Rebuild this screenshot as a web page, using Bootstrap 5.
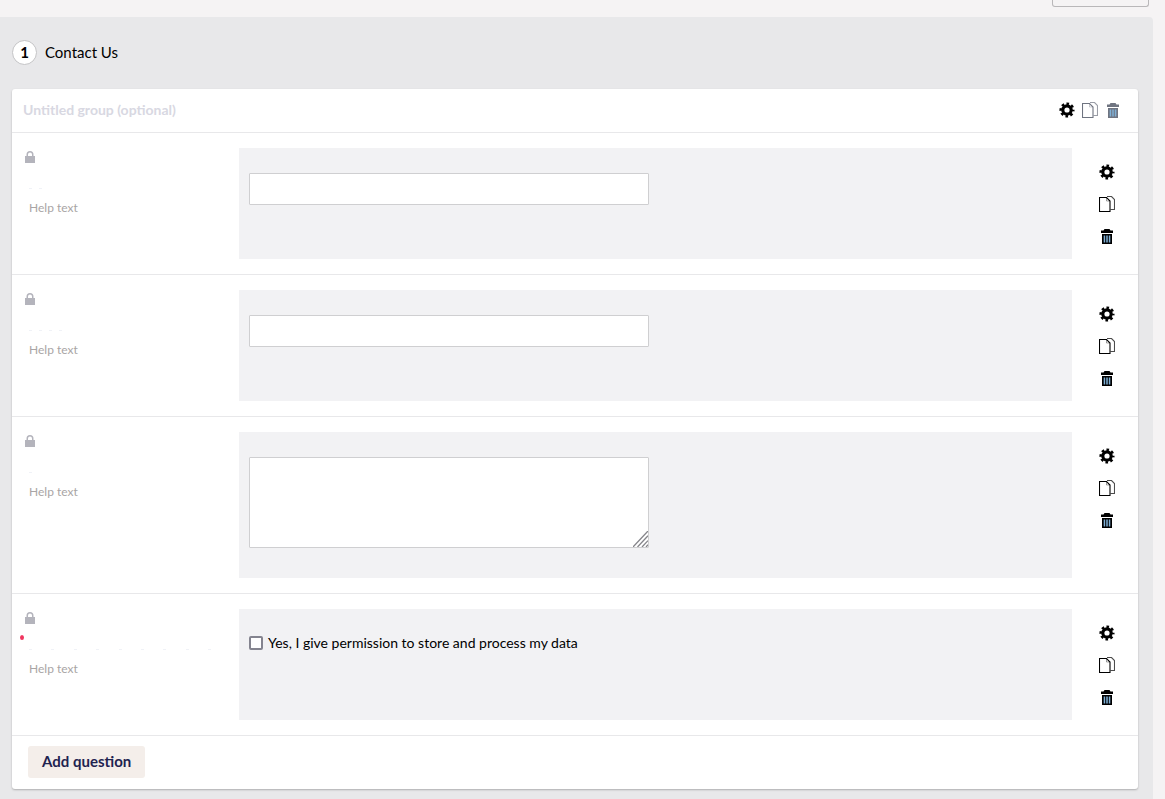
<!DOCTYPE html>
<html lang="en">
<head>
<meta charset="utf-8">
<title>Contact Us</title>
<link href="https://cdn.jsdelivr.net/npm/bootstrap@5.3.0/dist/css/bootstrap.min.css" rel="stylesheet">
<style>
html,body{height:799px;overflow:hidden}
body{background:#f5f3f4;font-family:Lato,"Liberation Sans",sans-serif;font-size:14px;color:#000}
.top-strip{height:17px;padding-right:16px}
.stub-btn{width:97px;height:7px;border:1px solid #b9b7b9;border-top:0;border-radius:0 0 3px 3px;background:transparent;display:block}
.section-panel{width:1153px;height:782px;background:#e8e8ea;border-radius:0 4px 0 0;padding:0 15px 0 12px}
.section-head{height:72px;gap:8px;font-size:15px;padding-bottom:2px}
.step-no{width:25px;height:25px;border:1px solid #c4c4c6;border-radius:50%;background:#fff;font-weight:700;font-size:15px;line-height:1}
.group-card{border:0;border-radius:3px;box-shadow:0 1px 2px rgba(0,0,0,.25);background:#fff;--bs-card-bg:#fff}
.group-head{height:44px;padding:0 17px 2px 11px;border-bottom:1px solid #e8e8ea}
.group-title{font-weight:700;font-size:14px;color:#d8d8e2}
.head-icons{gap:7px;line-height:0;padding-top:1px}
.q-row{padding:15px 0;border-bottom:1px solid #e8e8ea;min-height:142px}
.q-left{width:227px;flex:none;padding:0 0 0 13px;position:relative}
.lock{display:block;margin-top:3px;color:#b4b4bc}
.specks{height:1px;margin:25px 0 0 4px;gap:7px}
.specks i{display:block;width:3px;height:1px;background:#f0f2f7}
.specks-wide{width:182px;gap:0;justify-content:space-between}
.help-line{color:#a9a5a5;font-size:12px;line-height:15px;margin:11px 0 0 4px}
.req{position:absolute;left:8px;top:26px;width:4px;height:5px;background:#f0355f;border-radius:50%}
.q-body{flex:1 1 auto;background:#f2f2f4;padding:25px 10px 30px;min-height:111px}
.txt-field{display:block;width:400px;height:32px;border:1px solid #cfcfd1;background:#fff;border-radius:1px;padding:0;outline:0}
.area-wrap{width:400px}
textarea.txt-field{height:91px;resize:none}
.grip{position:absolute;right:1px;bottom:1px;display:block;pointer-events:none}
.check-line{margin-top:-1px;gap:5px;line-height:20px;color:#000}
.chk{width:14px;height:14px;border:2px solid #84848f;border-radius:2px;background:#fff;flex:none;appearance:none;margin:0}
.q-icons{width:66px;flex:none;gap:16px;padding:16px 0 0 4px}
.q-icons svg,.head-icons svg{display:block}
.muted-i{color:#6f7480}
.card-foot{height:53px;padding:10px 16px}
.add-btn{height:32px;padding:0 14px 2px;background:#f4eeea;border:0;border-radius:3px;font-weight:700;font-size:15px;color:#1f2350}
</style>
</head>
<body>
<svg width="0" height="0" class="position-absolute">
  <symbol id="ic-gear" viewBox="0 0 16 16">
    <circle cx="8" cy="8" r="4.200" fill="none" stroke="currentColor" stroke-width="3.200"/>
    <circle cx="8" cy="8" r="6.300" fill="none" stroke="currentColor" stroke-width="2.500" stroke-dasharray="2.600 2.350" stroke-dashoffset="1.300"/>
  </symbol>
  <symbol id="ic-copy" viewBox="0 0 16 16">
    <path d="M8 .5H12.500L15.500 3.500V13.500H11.500" fill="none" stroke="currentColor" stroke-opacity=".7" stroke-width="1.100"/>
    <path d="M.5 1.500H7.500L11 5V15.500H.5Z" fill="#fff" stroke="currentColor" stroke-width="1.100"/>
    <path d="M7.500 1.500V5H11" fill="none" stroke="currentColor" stroke-opacity=".45" stroke-width=".8"/>
  </symbol>
  <symbol id="ic-trash" viewBox="0 0 16 16">
    <path d="M5.500 1h5l1 1.500h2.500V5H2V2.500h2.500Z" fill="currentColor"/>
    <path d="M3 6h10v10H3Z" fill="currentColor"/>
    <path d="M4.700 7.500h1.500V14.500H4.700ZM7.250 7.500h1.500V14.500H7.250ZM9.800 7.500h1.500V14.500H9.800Z" fill="#7fb0d6"/>
  </symbol>
  <symbol id="ic-lock" viewBox="0 0 10 12">
    <path d="M0 5h1.500V3.500a3.500 3.500 0 0 1 7 0V5H10v7H0ZM3 5h4V3.500a2 2 0 0 0-4 0Z" fill="currentColor" fill-rule="evenodd"/>
  </symbol>
</svg>

<div class="top-strip d-flex justify-content-end">
  <button type="button" class="stub-btn" aria-label="Action"></button>
</div>

<main class="section-panel">
  <div class="section-head d-flex align-items-center">
    <span class="step-no d-inline-flex align-items-center justify-content-center">1</span>
    <span>Contact Us</span>
  </div>

  <div class="card group-card">
    <div class="group-head d-flex align-items-center justify-content-between">
      <span class="group-title">Untitled group (optional)</span>
      <span class="head-icons d-flex align-items-center">
        <svg width="16" height="16"><use href="#ic-gear"/></svg>
        <svg class="muted-i" width="16" height="16"><use href="#ic-copy"/></svg>
        <svg class="muted-i" width="16" height="16"><use href="#ic-trash"/></svg>
      </span>
    </div>

    <section class="q-row d-flex">
      <div class="q-left">
        <svg class="lock" width="10" height="12"><use href="#ic-lock"/></svg>
        <div class="specks d-flex"><i></i><i></i></div>
        <div class="help-line">Help text</div>
      </div>
      <div class="q-body"><input class="txt-field" type="text" aria-label="Answer"></div>
      <div class="q-icons d-flex flex-column align-items-center">
        <svg width="16" height="16"><use href="#ic-gear"/></svg>
        <svg width="16" height="16"><use href="#ic-copy"/></svg>
        <svg width="16" height="16"><use href="#ic-trash"/></svg>
      </div>
    </section>

    <section class="q-row d-flex">
      <div class="q-left">
        <svg class="lock" width="10" height="12"><use href="#ic-lock"/></svg>
        <div class="specks d-flex"><i></i><i></i><i></i><i></i></div>
        <div class="help-line">Help text</div>
      </div>
      <div class="q-body"><input class="txt-field" type="text" aria-label="Answer"></div>
      <div class="q-icons d-flex flex-column align-items-center">
        <svg width="16" height="16"><use href="#ic-gear"/></svg>
        <svg width="16" height="16"><use href="#ic-copy"/></svg>
        <svg width="16" height="16"><use href="#ic-trash"/></svg>
      </div>
    </section>

    <section class="q-row d-flex">
      <div class="q-left">
        <svg class="lock" width="10" height="12"><use href="#ic-lock"/></svg>
        <div class="specks d-flex"><i></i></div>
        <div class="help-line">Help text</div>
      </div>
      <div class="q-body">
        <div class="area-wrap position-relative">
          <textarea class="txt-field" aria-label="Answer"></textarea>
          <svg class="grip" width="15" height="16" viewBox="0 0 15 16" aria-hidden="true">
            <path d="M0 16 15 0M4.500 16 15 4.800M9 16 15 9.600M13 16 15 13.800" fill="none" stroke="#85858a" stroke-width="1.300"/>
          </svg>
        </div>
      </div>
      <div class="q-icons d-flex flex-column align-items-center">
        <svg width="16" height="16"><use href="#ic-gear"/></svg>
        <svg width="16" height="16"><use href="#ic-copy"/></svg>
        <svg width="16" height="16"><use href="#ic-trash"/></svg>
      </div>
    </section>

    <section class="q-row d-flex">
      <div class="q-left">
        <svg class="lock" width="10" height="12"><use href="#ic-lock"/></svg>
        <span class="req"></span>
        <div class="specks specks-wide d-flex"><i></i><i></i><i></i><i></i><i></i><i></i><i></i><i></i><i></i></div>
        <div class="help-line">Help text</div>
      </div>
      <div class="q-body">
        <label class="check-line d-flex align-items-center">
          <input class="chk" type="checkbox">
          <span>Yes, I give permission to store and process my data</span>
        </label>
      </div>
      <div class="q-icons d-flex flex-column align-items-center">
        <svg width="16" height="16"><use href="#ic-gear"/></svg>
        <svg width="16" height="16"><use href="#ic-copy"/></svg>
        <svg width="16" height="16"><use href="#ic-trash"/></svg>
      </div>
    </section>

    <div class="card-foot">
      <button type="button" class="add-btn">Add question</button>
    </div>
  </div>
</main>
<script src="https://cdn.jsdelivr.net/npm/bootstrap@5.3.0/dist/js/bootstrap.bundle.min.js"></script>
</body>
</html>
